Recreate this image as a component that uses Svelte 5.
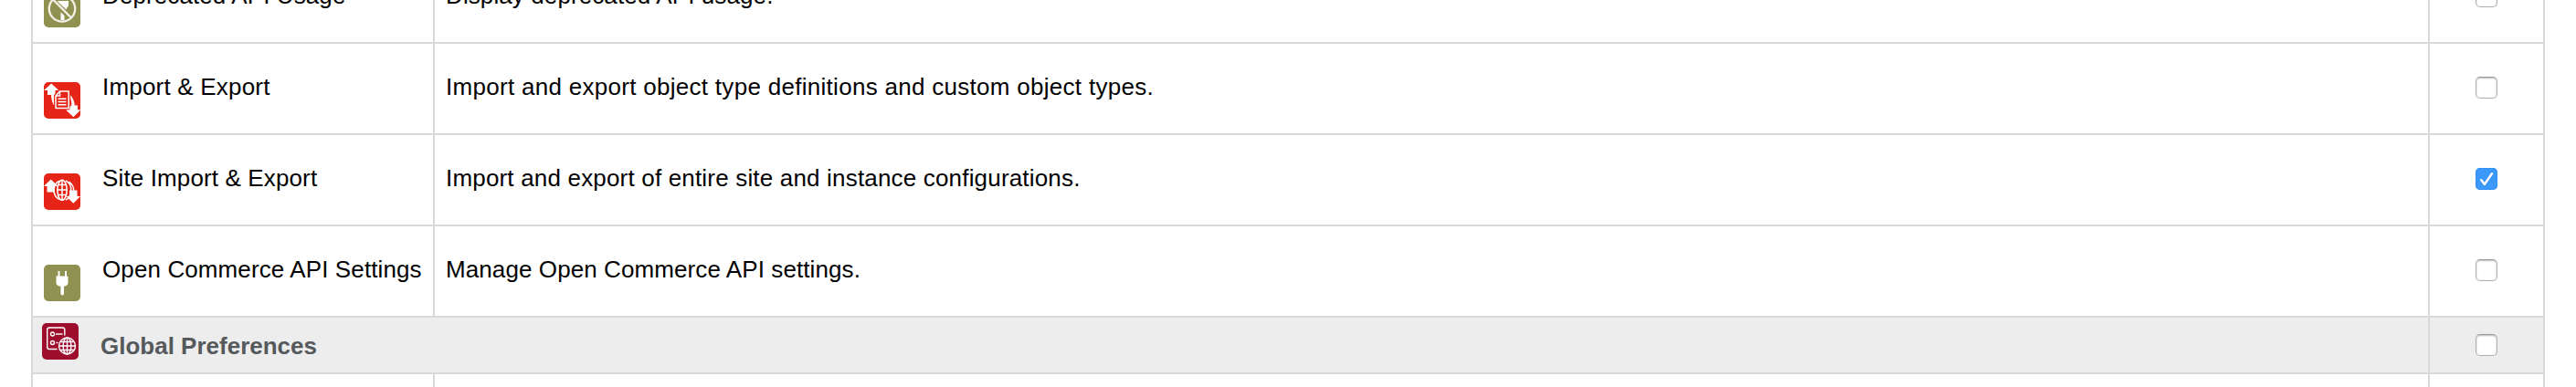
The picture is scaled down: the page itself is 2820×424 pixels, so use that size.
<script>
  const rows = [
    { icon: 'deprecated', name: 'Deprecated API Usage', nameGap: 0.1, text: 'Display deprecated API usage.', textGap: 0.1, checked: false },
    { icon: 'impex', name: 'Import & Export', nameGap: 0.2, text: 'Import and export object type definitions and custom object types.', textGap: 0.29, checked: false },
    { icon: 'site', name: 'Site Import & Export', nameGap: 0.13, text: 'Import and export of entire site and instance configurations.', textGap: 0.18, checked: true },
    { icon: 'plug', name: 'Open Commerce API Settings', nameGap: 0.11, text: 'Manage Open Commerce API settings.', textGap: 0.09, checked: false }
  ];
</script>

{#snippet box(checked)}
  <span class="box" class:checked role="checkbox" aria-checked={checked} tabindex="0">
    {#if checked}
      <svg width="24" height="24" viewBox="0 0 24 24" fill="none" stroke-linecap="round" stroke-linejoin="round">
        <path d="M6.3 14.2 9.9 19 18 7.2" stroke="#1769c4" stroke-opacity=".45" stroke-width="2.4" />
        <path d="M6.3 13.2 9.9 18 18 6.2" stroke="#fff" stroke-width="2.5" />
      </svg>
    {/if}
  </span>
{/snippet}

{#snippet icon(kind)}
  <svg class="icon" width="40" height="40" viewBox="0 0 40 40" fill="none">
    {#if kind === 'deprecated'}
      <rect width="40" height="40" rx="5" fill="#8f9150" />
      <path d="M17 4v6M24 4v6M15 11h12v5l-3 5h-1.500v11h-4V21l-3-4z" fill="#fff" />
      <path d="M9 10 30 30" stroke="#8f9150" stroke-width="6" />
      <circle cx="20" cy="19.500" r="14.200" stroke="#f1f1e9" stroke-width="2.300" />
      <path d="M10 9.500 30 29.500" stroke="#f1f1e9" stroke-width="2.300" />
    {:else if kind === 'impex'}
      <rect width="40" height="40" rx="5" fill="#e52518" />
      <path d="M8 13c0 7 2 12.500 6 16v-4c-2-3-2.500-7-2.500-12zM25.500 10.500c5 4 8 9 8.500 16h-3.500c0-6-1.500-10-5-13z" fill="#fff" />
      <path d="M8.200 1.500 16.300 9H12.500v5H4V9H0zM28.300 25.500h8.500v5H40l-7.600 7.500-8-7.500h3.900z" fill="#fff" />
      <path d="M17.500 10H27.200V28.500H13V15z" fill="#e52518" stroke="#e52518" stroke-width="4" />
      <path d="M17.500 10H27.200V28.500H13V15z" fill="#e52518" stroke="#fff" stroke-width="1.500" stroke-linejoin="round" />
      <path d="M13 15h4.500V10M15.500 18.300h9M15.500 21.500h9M15.500 24.700h9" stroke="#fff" stroke-width="1.500" />
      <path d="M24.400 30.500h3.900v-3l8.500-2v5H40l-7.600 7.500z" fill="#fff" />
    {:else if kind === 'site'}
      <rect width="40" height="40" rx="5" fill="#e52518" />
      <g stroke="#fff" stroke-width="1.500">
        <ellipse cx="20" cy="18.300" rx="5.200" ry="11" />
        <path d="M20 7v22.500M15.500 12.500h9M14.500 18h11M15.500 23.500h9" />
        <path d="M17 8.200c-8 4-8 16 0 20.500M24 8c8 4 7.500 17 0 21M27.500 9c3.500 2.500 5.200 6 5.200 10" />
      </g>
      <path d="M7.700 6.500 15.500 14H12v6.500H3.500V14H0z" fill="#fff" />
      <path d="M28 18.500h8.500V25H40l-7.700 7.700-8-7.700H28z" fill="#fff" />
    {:else if kind === 'plug'}
      <rect width="40" height="40" rx="5" fill="#8f9150" />
      <path d="M15.500 7h2v5.500h5.500V7h2v5.500h1.500v8.500L24 23.500h-2v8.300q0 1.700-1.800 1.700t-1.800-1.700v-8.300H16L13.500 21v-8.500h2z" fill="#fff" />
    {:else}
      <rect width="40" height="40" rx="5" fill="#9e0e2c" />
      <g stroke="#fff" stroke-width="1.400">
        <path d="M16.500 28.500H8q-2.300 0-2.300-2.300V7.300Q5.700 5 8 5h14.500q2.300 0 2.300 2.300V13.500" />
        <circle cx="11.500" cy="12" r="2" /><path d="M15 12h7.500" />
        <circle cx="11.500" cy="21.500" r="2" /><path d="M15.500 21.500h2" />
        <circle cx="27.500" cy="25" r="9" />
        <ellipse cx="27.500" cy="25" rx="4.400" ry="9" />
        <path d="M27.500 16v18M18.700 25h17.600M20.300 20.500h14.400M20.300 29.500h14.400" />
      </g>
    {/if}
  </svg>
{/snippet}

<main>
  <div class="table">
    {#each rows as row}
      <div class="row">
        <div class="name">{@render icon(row.icon)}<span style:letter-spacing="{row.nameGap}px">{row.name}</span></div>
        <div class="desc"><span style:letter-spacing="{row.textGap}px">{row.text}</span></div>
        <div class="check">{@render box(row.checked)}</div>
      </div>
    {/each}
    <div class="row head">
      <div class="name">{@render icon('prefs')}<span>Global Preferences</span></div>
      <div class="check">{@render box(false)}</div>
    </div>
    <div class="row"><div class="name"></div><div class="desc"></div><div class="check"></div></div>
  </div>
</main>

<style>
  :global(body) { background: #fff; }
  main {
    height: 424px;
    overflow: hidden;
    font: 26px/32px "Liberation Sans", Arial, sans-serif;
    color: #000;
  }
  .table {
    box-sizing: border-box;
    width: 2752px;
    margin: -54px 0 0 34px;
    border: 2px solid #d9d9d9;
    border-bottom: 0;
  }
  .row {
    display: grid;
    grid-template-columns: 440px 2184px 124px;
    height: 98px;
    border-bottom: 2px solid #d9d9d9;
  }
  .row > div { box-sizing: border-box; display: flex; white-space: nowrap; }
  .row > .name { padding: 31px 0 0 12px; border-right: 2px solid #d9d9d9; }
  .icon { flex: none; margin: 11px 24px 0 0; }
  .row > .desc { padding: 31px 0 0 12px; border-right: 2px solid #d9d9d9; }
  .row > .check { align-items: center; justify-content: center; padding-bottom: 2px; }
  .row.head { height: 60px; grid-template-columns: 2624px 124px; background: #ededed; }
  .row.head > .name { padding: 15px 0 0 10px; font-weight: 700; color: #55595c; }
  .head .icon { margin: -9px 24px 0 0; }
  .row.head > .check { padding: 0; }
  .box {
    box-sizing: border-box;
    width: 24px;
    height: 24px;
    border: 1px solid #b0b0b0;
    border-top-color: #999;
    border-radius: 5px;
    background: #fff;
    box-shadow: inset 0 1px 2px rgba(0, 0, 0, .28);
  }
  .box.checked { border: 0; background: #3b99fc; box-shadow: inset 0 0 0 1px #3290f5; }
  .box svg { display: block; }
</style>
